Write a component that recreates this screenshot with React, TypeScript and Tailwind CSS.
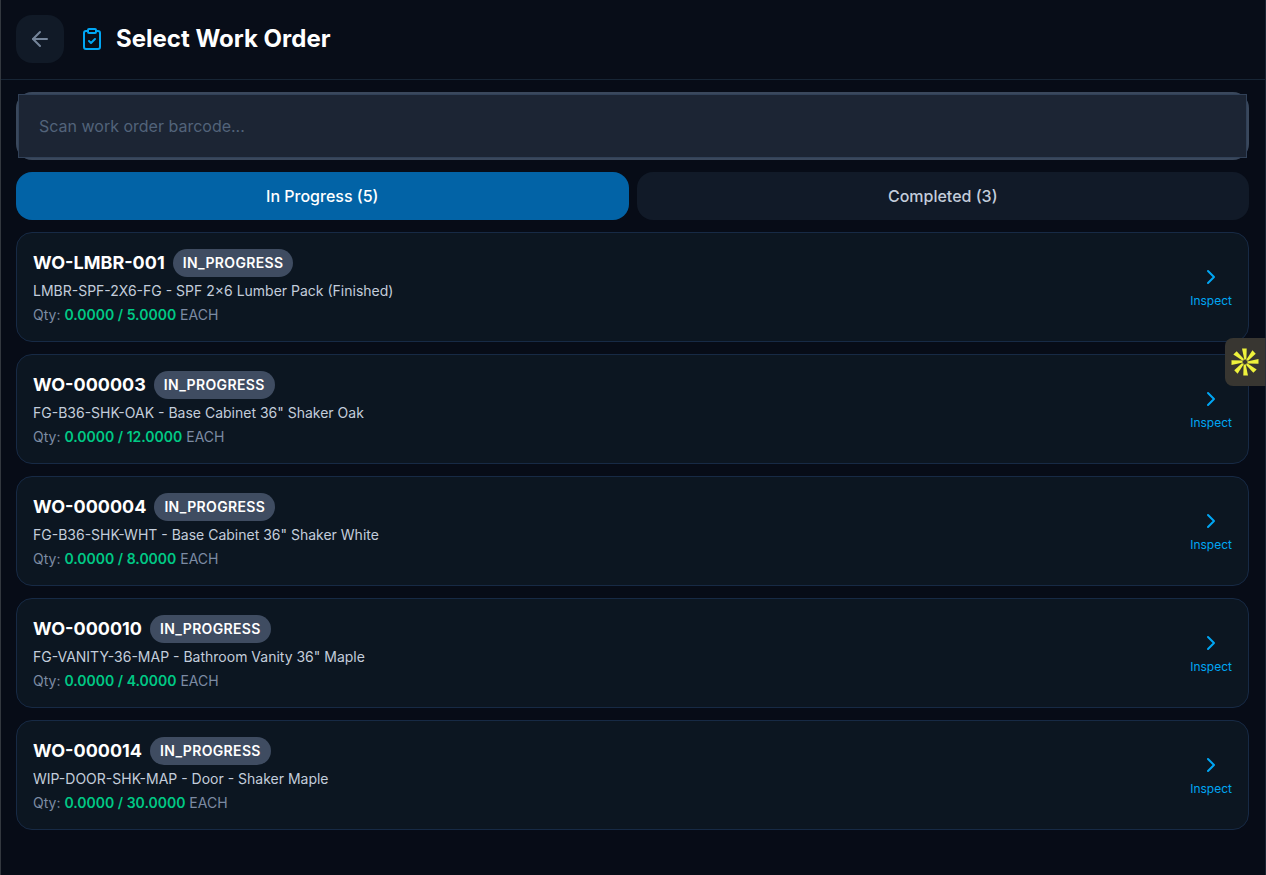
import { useState } from "react";
import { ArrowLeft, ChevronRight, ClipboardCheck } from "lucide-react";

type WorkOrder = {
    number: string;
    item: string;
    done: string;
    total: string;
};

const inProgress: WorkOrder[] = [
    { number: "WO-LMBR-001", item: "LMBR-SPF-2X6-FG - SPF 2×6 Lumber Pack (Finished)", done: "0.0000", total: "5.0000" },
    { number: "WO-000003", item: 'FG-B36-SHK-OAK - Base Cabinet 36" Shaker Oak', done: "0.0000", total: "12.0000" },
    { number: "WO-000004", item: 'FG-B36-SHK-WHT - Base Cabinet 36" Shaker White', done: "0.0000", total: "8.0000" },
    { number: "WO-000010", item: 'FG-VANITY-36-MAP - Bathroom Vanity 36" Maple', done: "0.0000", total: "4.0000" },
    { number: "WO-000014", item: "WIP-DOOR-SHK-MAP - Door - Shaker Maple", done: "0.0000", total: "30.0000" },
];

const tabs = [
    { id: "progress", label: "In Progress (5)" },
    { id: "completed", label: "Completed (3)" },
];

function WorkOrderCard({ order }: { order: WorkOrder }) {
    return (
        <button
            type="button"
            className="flex w-full items-center justify-between rounded-2xl border border-[#172a45] bg-[#0c1621] p-4 text-left"
        >
            <span className="flex flex-col gap-1">
                <span className="flex items-center gap-2">
                    <span className="text-lg font-bold text-white">{order.number}</span>
                    <span className="rounded-full bg-[#3f4c61] px-2.5 py-1 text-sm font-semibold tracking-wide text-white">
                        IN_PROGRESS
                    </span>
                </span>
                <span className="text-sm text-[#c3cddb]">{order.item}</span>
                <span className="text-sm text-[#7c8ba3]">
                    Qty:{" "}
                    <span className="font-semibold text-[#00c985]">
                        {order.done} / {order.total}
                    </span>{" "}
                    EACH
                </span>
            </span>
            <span className="flex flex-col items-center gap-1 text-[#00a6f4]">
                <ChevronRight size={24} />
                <span className="text-xs">Inspect</span>
            </span>
        </button>
    );
}

function WidgetButton() {
    return (
        <button
            type="button"
            aria-label="Open assistant"
            className="fixed top-[338px] right-0 flex h-12 w-[41px] items-center justify-center rounded-l-lg border-r border-[#2b3038] bg-[#383631]"
        >
            <svg viewBox="-14 -14 28 28" className="size-7 fill-[#eef23c]">
                {[0, 45, 90, 135, 180, 225, 270, 315].map((angle) => (
                    <path key={angle} d="M-3 -13.5 L1.7 -13.5 L1.4 -3 L-0.6 -2 Z" transform={`rotate(${angle})`} />
                ))}
            </svg>
        </button>
    );
}

export default function App() {
    const [tab, setTab] = useState("progress");

    return (
        <div className="min-h-screen border-r border-l border-r-[#1a2432] border-l-[#33383f] bg-[#070c17] font-['Inter','Liberation_Sans',sans-serif]">
            <header className="flex items-center border-b border-[#172535] bg-[#080d18] pt-[15px] pr-4 pb-4 pl-[15px]">
                <button
                    type="button"
                    aria-label="Back"
                    className="flex size-12 items-center justify-center rounded-2xl bg-[#111a27] text-[#75859a]"
                >
                    <ArrowLeft size={24} />
                </button>
                <h1 className="ml-4 flex items-center gap-3 text-2xl font-bold text-white">
                    <ClipboardCheck size={24} className="text-[#00a6f4]" />
                    Select Work Order
                </h1>
            </header>
            <main className="flex flex-col gap-3 pt-3 pr-4 pb-4 pl-[15px]">
                <div className="rounded-2xl border-2 border-[#3a485c] bg-[#1c2534]">
                    <input
                        type="text"
                        aria-label="Work order barcode"
                        placeholder="Scan work order barcode..."
                        className="block h-16 w-full border border-[#314158] bg-[#1c2534] px-5 text-base text-white outline-none placeholder:text-[#52637a]"
                    />
                </div>
                <div className="grid grid-cols-2 gap-2">
                    {tabs.map(({ id, label }) => (
                        <button
                            key={id}
                            type="button"
                            onClick={() => setTab(id)}
                            className={`h-12 rounded-2xl text-base font-medium ${
                                tab === id ? "bg-[#0263a6] text-white" : "bg-[#111a28] text-[#c3cddb]"
                            }`}
                        >
                            {label}
                        </button>
                    ))}
                </div>
                {inProgress.map((order) => (
                    <WorkOrderCard key={order.number} order={order} />
                ))}
            </main>
            <WidgetButton />
        </div>
    );
}
